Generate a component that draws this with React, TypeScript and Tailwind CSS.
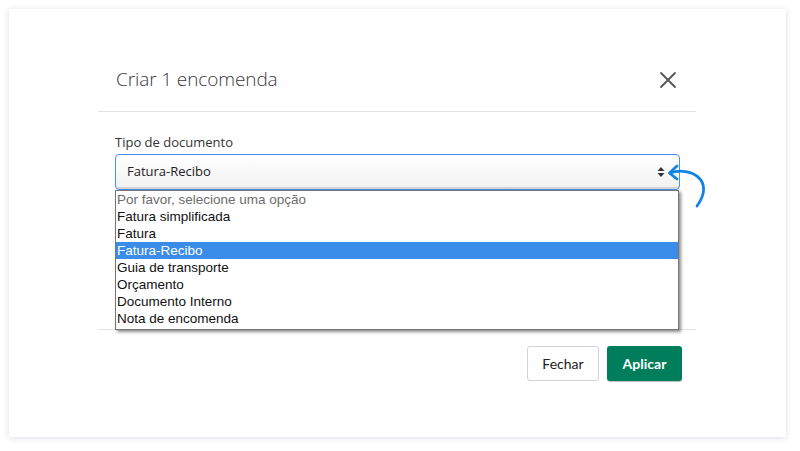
import React from "react";

const options = [
  "Fatura simplificada",
  "Fatura",
  "Fatura-Recibo",
  "Guia de transporte",
  "Orçamento",
  "Documento Interno",
  "Nota de encomenda",
];

export default function App() {
  const selected = "Fatura-Recibo";

  return (
    <div className="w-[800px] h-[451px] bg-white p-[9px] font-['Open_Sans',sans-serif]">
      <div className="w-[777px] h-[428px] bg-white shadow-[0_1px_6px_rgba(60,70,100,0.18)] pt-[39px]">
        <div className="ml-[89px] w-[598px]">
          {/* Header */}
          <div className="h-[64px] flex items-center justify-between border-b border-[#e2e2e2] pl-[18px] pr-[18px]">
            <h2 className="text-[19px] font-light text-[#383838] tracking-[-0.1px]">Criar 1 encomenda</h2>
            <button className="text-[#555]" aria-label="Fechar">
              <svg width="20" height="20" viewBox="0 0 20 20" fill="none" stroke="currentColor" strokeWidth="1.8" strokeLinecap="round">
                <path d="M3 3 L17 17 M17 3 L3 17" />
              </svg>
            </button>
          </div>

          {/* Body */}
          <div className="h-[218px] border-b border-[#e2e2e2] pt-[22px] pl-[17px] pr-[16px]">
            <label className="block text-[13px] leading-[16px] text-[#333] mb-[4px]">Tipo de documento</label>
            <div className="relative">
              <div className="h-[36px] w-[565px] flex items-center justify-between rounded-[4px] border border-[#4a8ff5] bg-gradient-to-b from-white to-[#f1f1f1] shadow-[inset_0_-2px_0_rgba(0,0,0,0.12)] pl-[11px] pr-[14px]">
                <span className="text-[13px] text-[#222]">{selected}</span>
                <svg width="8" height="12" viewBox="0 0 8 12" className="text-[#333]">
                  <path d="M4 1 L7.5 5 H0.5 Z M4 11 L7.5 7 H0.5 Z" fill="currentColor" />
                </svg>
              </div>

              {/* Blue pointer arrow */}
              <svg className="absolute left-[551px] top-[8px]" width="56" height="50" viewBox="0 0 56 50" fill="none" stroke="#1283e4" strokeWidth="2.8" strokeLinecap="round" strokeLinejoin="round">
                <path d="M4 11 C24 4, 50 18, 31 44" />
                <path d="M11 4 L3.5 11 L11 17" />
              </svg>

              {/* Open dropdown list */}
              <ul className="absolute left-0 top-[36px] w-[564px] bg-white border border-[#767676] shadow-[2px_2px_3px_rgba(0,0,0,0.45)] font-['Liberation_Sans',Arial,sans-serif] text-[13.5px] leading-[17px] pb-[2px] z-10">
                <li className="px-[1px] text-[#6d6d6d]">Por favor, selecione uma opção</li>
                {options.map((o) => (
                  <li
                    key={o}
                    className={o === selected ? "px-[1px] bg-[#3a8ce9] text-white" : "px-[1px] text-[#111]"}
                  >
                    {o}
                  </li>
                ))}
              </ul>
            </div>
          </div>

          {/* Footer */}
          <div className="flex justify-end gap-[8px] pt-[16px] pr-[14px] font-['Lato',sans-serif]">
            <button className="h-[35px] w-[72px] rounded-[3px] border border-[#d0d3d8] bg-white text-[14px] text-[#222]">
              Fechar
            </button>
            <button className="h-[35px] w-[75px] rounded-[3px] bg-[#007e5c] text-[14px] font-bold text-white shadow-[0_1px_0_rgba(0,0,0,0.25)]">
              Aplicar
            </button>
          </div>
        </div>
      </div>
    </div>
  );
}
